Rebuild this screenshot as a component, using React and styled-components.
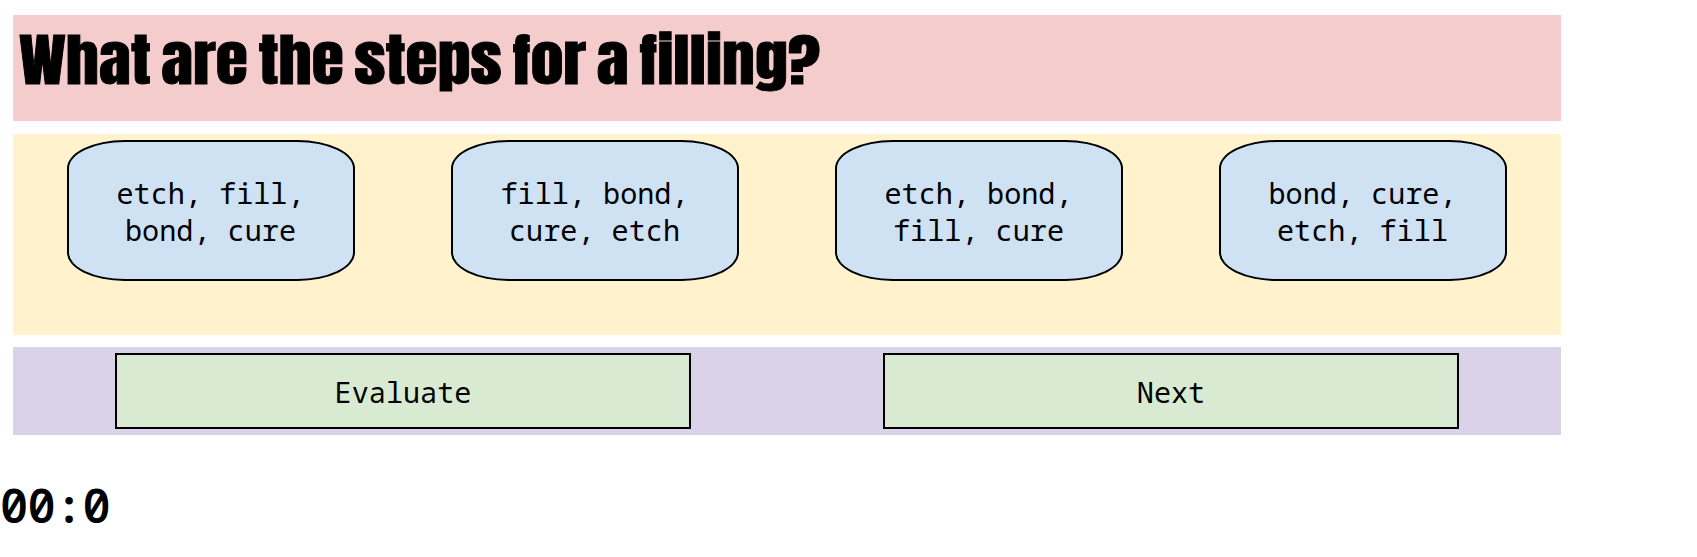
import React from 'react';
import styled, { createGlobalStyle } from 'styled-components';

const GlobalStyle = createGlobalStyle`
  * { box-sizing: border-box; }
  body {
    margin: 0;
    background: #fff;
    color: #000;
    font-family: Consolas, 'Noto Sans Mono', 'Liberation Mono', monospace;
  }
`;

const Page = styled.main`
  padding-top: 15px;
`;

const Quiz = styled.div`
  display: flex;
  flex-direction: column;
  width: 1548px;
  margin-left: 13px;
`;

const Panel = styled.section`
  display: flex;
  align-items: flex-start;
  height: ${(p) => p.$height}px;
  margin-bottom: ${(p) => p.$gap || 0}px;
  padding: 6px;
  background: ${(p) => p.$color};
`;

const Question = styled.h1`
  margin: 0;
  font-family: Impact, Anton, Inter, sans-serif;
  font-size: 56.5px;
  font-weight: 400;
  line-height: 79px;
  word-spacing: -4.2px;
  white-space: nowrap;
  -webkit-text-stroke: 0.8px #000;
  transform: scaleX(1.163);
  transform-origin: 0 0;
`;

const Cell = styled.div`
  flex: 1;
  display: flex;
  justify-content: center;
`;

const Choice = styled.button`
  width: 75%;
  height: ${(p) => (p.$pill ? 141 : 76)}px;
  padding: ${(p) => (p.$pill ? '2px 41px 0 40px' : '2px 6px 0')};
  border: 2px solid #000;
  border-radius: ${(p) => (p.$pill ? '20%' : '0')};
  background: ${(p) => (p.$pill ? '#cfe2f3' : '#d9ead3')};
  color: #000;
  font-family: inherit;
  font-size: 28.5px;
  font-weight: 400;
  line-height: 37px;
  text-align: center;
`;

const Timer = styled.div`
  margin-top: 43px;
  font-size: 47px;
  font-weight: 600;
  line-height: 54px;
  letter-spacing: -0.7px;
`;

const answers = [
  'etch, fill, bond, cure',
  'fill, bond, cure, etch',
  'etch, bond, fill, cure',
  'bond, cure, etch, fill',
];

export default function App() {
  return (
    <Page>
      <GlobalStyle />
      <Quiz>
        <Panel $height={106} $gap={13} $color="#f4cccc">
          <Question>What are the steps for a filling?</Question>
        </Panel>
        <Panel $height={201} $gap={12} $color="#fff2cc">
          {answers.map((answer) => (
            <Cell key={answer}>
              <Choice $pill>{answer}</Choice>
            </Cell>
          ))}
        </Panel>
        <Panel $height={88} $color="#d9d2e9">
          {['Evaluate', 'Next'].map((label) => (
            <Cell key={label}>
              <Choice>{label}</Choice>
            </Cell>
          ))}
        </Panel>
      </Quiz>
      <Timer>00:0</Timer>
    </Page>
  );
}
